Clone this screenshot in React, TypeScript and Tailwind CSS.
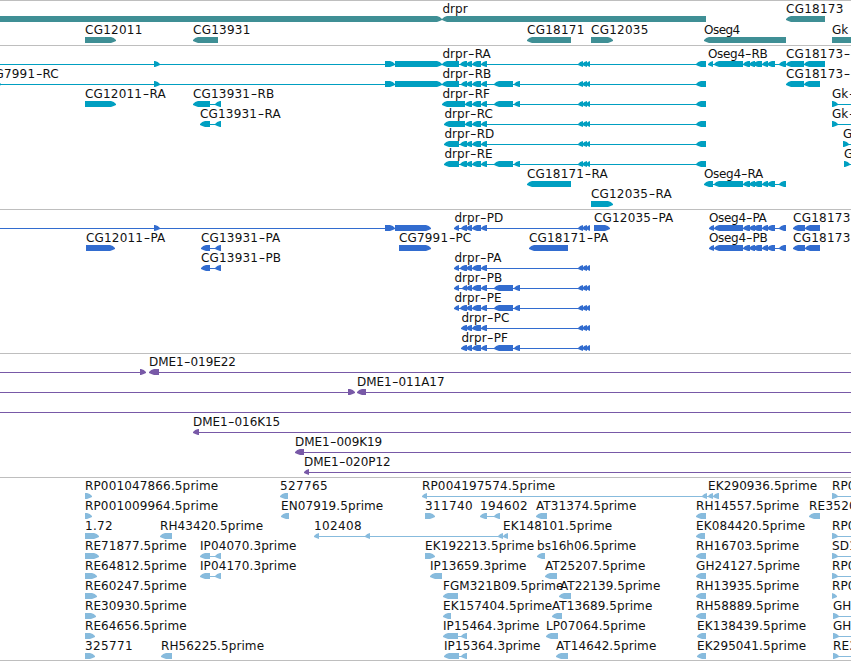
type Dir = 'l' | 'r'

type Feature = {
  name?: string
  at?: number
  dir?: Dir
  line?: [number, number]
  boxes?: number[][]
}

type TrackData = {
  id: string
  color: string
  className: string
  rowClass: string
  rows: Feature[][]
}

// exon groups shared by several transcripts
const TAIL = [[472, 481], [481, 487]]
const MID = [[494, 513], [514, 520]]
const FIRST = [[578, 583], [582, 587], [586, 590]]
const UTR = [[696, 706]]
const OSEG = [[714, 743], [743, 750], [749, 755], [753, 762], [762, 768], [767, 775], [779, 786]]
const CG7991 = [[154, 160], [385, 395], [395, 442]]

const f = (name: string, dir: Dir, boxes: number[][], line?: [number, number], at?: number): Feature => ({
  name,
  dir,
  boxes,
  line,
  at,
})

const gk = (name: string, x: number): Feature => f(name, 'r', [[x, x + 6]], [x, 860])
const est = (name: string, x: number): Feature => f(name, 'r', [[x, x + 6]], [x, 860])

const tracks: TrackData[] = [
  {
    id: 'gene',
    color: '#3f8f95',
    className: 'h-[45px]',
    rowClass: 'h-[21px]',
    rows: [
      [
        { dir: 'r', boxes: [[-10, 442]] },
        f('drpr', 'l', [[442, 706]]),
        f('CG18173', 'l', [[786, 825]]),
      ],
      [
        f('CG12011', 'r', [[85, 116]]),
        f('CG13931', 'l', [[193, 218]]),
        f('CG18171', 'l', [[527, 571]]),
        f('CG12035', 'r', [[591, 613]]),
        f('Oseg4', 'l', [[704, 786]]),
        f('Gk', 'r', [[832, 870]]),
      ],
    ],
  },
  {
    id: 'transcript',
    color: '#009fc1',
    className: 'h-[164px]',
    rowClass: 'h-5',
    rows: [
      [
        { dir: 'r', line: [0, 442], boxes: CG7991 },
        f('drpr-RA', 'l', [[442, 459], [460, 467], [466, 472], ...TAIL, ...FIRST, ...UTR], [442, 706]),
        f('Oseg4-RB', 'l', [[708, 713], ...OSEG], [708, 786]),
        f('CG18173-', 'l', [[786, 804], [804, 825]]),
      ],
      [
        f('CG7991-RC', 'r', [[-5, 1], ...CG7991], [0, 442], -14),
        f('drpr-RB', 'l', [[442, 459], [461, 467], [466, 472], ...TAIL, ...MID, ...FIRST, ...UTR], [442, 706]),
        f('CG18173-', 'l', [[786, 804], [804, 820]]),
      ],
      [
        f('CG12011-RA', 'r', [[85, 116]]),
        f('CG13931-RB', 'l', [[193, 210], [215, 221]], [193, 221]),
        f('drpr-RF', 'l', [[442, 465], [465, 472], ...TAIL, ...MID, ...FIRST, ...UTR], [442, 706]),
        gk('Gk-', 832),
      ],
      [
        f('CG13931-RA', 'l', [[200, 210], [215, 221]], [200, 221]),
        f('drpr-RC', 'l', [[444, 465], [465, 472], ...TAIL, ...FIRST, ...UTR], [444, 706]),
        gk('Gk-', 832),
      ],
      [
        f('drpr-RD', 'l', [[444, 459], [460, 467], [466, 472], ...TAIL, ...FIRST, ...UTR], [444, 706]),
        gk('G', 843),
      ],
      [
        f('drpr-RE', 'l', [[444, 459], [460, 467], [466, 472], ...TAIL, ...MID, ...FIRST, ...UTR], [444, 706]),
        gk('G', 844),
      ],
      [
        f('CG18171-RA', 'l', [[527, 571]]),
        f('Oseg4-RA', 'l', [[704, 713], ...OSEG], [704, 786]),
      ],
      [f('CG12035-RA', 'r', [[591, 613]])],
    ],
  },
  {
    id: 'protein',
    color: '#326ccf',
    className: 'h-36',
    rowClass: 'h-5',
    rows: [
      [
        { dir: 'r', line: [0, 430], boxes: [[154, 160], [385, 395], [395, 431]] },
        f('drpr-PD', 'l', [[454, 459], [461, 467], [466, 472], ...TAIL, ...FIRST], [454, 590]),
        f('CG12035-PA', 'r', [[594, 610]]),
        f('Oseg4-PA', 'l', [[709, 714], ...OSEG], [709, 786]),
        f('CG18173', 'l', [[793, 805], [805, 820]]),
      ],
      [
        f('CG12011-PA', 'r', [[86, 115]]),
        f('CG13931-PA', 'l', [[201, 210], [215, 221]], [201, 221]),
        f('CG7991-PC', 'r', [[399, 431]]),
        f('CG18171-PA', 'l', [[529, 568]]),
        f('Oseg4-PB', 'l', [[709, 714], ...OSEG], [709, 786]),
        f('CG18173', 'l', [[793, 805], [805, 820]]),
      ],
      [
        f('CG13931-PB', 'l', [[201, 210], [215, 221]], [201, 221]),
        f('drpr-PA', 'l', [[454, 459], [460, 467], [466, 472], ...TAIL, ...FIRST], [454, 590]),
      ],
      [f('drpr-PB', 'l', [[454, 459], [462, 467], [466, 472], ...TAIL, ...MID, ...FIRST], [454, 590])],
      [f('drpr-PE', 'l', [[454, 459], [460, 467], [466, 472], ...TAIL, ...MID, ...FIRST], [454, 590])],
      [f('drpr-PC', 'l', [[461, 467], [466, 472], ...TAIL, ...FIRST], [461, 590])],
      [f('drpr-PF', 'l', [[461, 467], [466, 472], ...TAIL, ...MID, ...FIRST], [461, 590])],
    ],
  },
  {
    id: 'bac',
    color: '#7859a7',
    className: 'h-[124px]',
    rowClass: 'h-5',
    rows: [
      [
        { dir: 'r', line: [0, 146], boxes: [[140, 146]] },
        f('DME1-019E22', 'l', [[149, 159]], [149, 851]),
      ],
      [
        { dir: 'r', line: [0, 355], boxes: [[348, 355]] },
        f('DME1-011A17', 'l', [[357, 366]], [357, 851]),
      ],
      [{ line: [0, 851] }],
      [f('DME1-016K15', 'l', [[193, 199]], [193, 851])],
      [f('DME1-009K19', 'l', [[295, 304]], [295, 851])],
      [f('DME1-020P12', 'l', [[304, 309]], [304, 851])],
    ],
  },
  {
    id: 'est',
    color: '#87bbdd',
    className: 'h-[184px] border-b',
    rowClass: 'h-5',
    rows: [
      [
        f('RP001047866.5prime', 'r', [[85, 92]]),
        f('527765', 'l', [[280, 288]]),
        f('RP004197574.5prime', 'l', [[422, 427], [702, 707]], [422, 719]),
        f('EK290936.5prime', 'l', [[708, 713], [713, 719]]),
        est('RP0', 832),
      ],
      [
        f('RP001009964.5prime', 'r', [[85, 92]]),
        f('EN07919.5prime', 'l', [[281, 289]]),
        f('311740', 'r', [[425, 435]]),
        f('194602', 'l', [[480, 487], [494, 500]], [480, 500]),
        f('AT31374.5prime', 'l', [[536, 547]]),
        f('RH14557.5prime', 'l', [[696, 706]]),
        f('RE3520', 'l', [[809, 820]]),
      ],
      [
        f('1.72', 'r', [[85, 99]]),
        f('RH43420.5prime', 'l', [[160, 172]]),
        f('102408', 'l', [[314, 319], [365, 370], [498, 503]], [314, 503]),
        f('EK148101.5prime', 'l', [[503, 508]]),
        f('EK084420.5prime', 'l', [[696, 705]]),
        est('RP0', 832),
      ],
      [
        f('RE71877.5prime', 'r', [[85, 99]]),
        f('IP04070.3prime', 'l', [[200, 210], [215, 221]], [200, 221]),
        f('EK192213.5prime', 'r', [[425, 435]]),
        f('bs16h06.5prime', 'l', [[537, 545]]),
        f('RH16703.5prime', 'l', [[696, 706]]),
        est('SD1', 832),
      ],
      [
        f('RE64812.5prime', 'r', [[85, 97]]),
        f('IP04170.3prime', 'l', [[200, 210], [215, 221]], [200, 221]),
        f('IP13659.3prime', 'l', [[430, 442]]),
        f('AT25207.5prime', 'l', [[545, 557]]),
        f('GH24127.5prime', 'l', [[696, 706]]),
        est('RP0', 832),
      ],
      [
        f('RE60247.5prime', 'r', [[85, 97]]),
        f('FGM321B09.5prime', 'l', [[443, 458]]),
        f('AT22139.5prime', 'l', [[559, 571]], undefined, 560),
        f('RH13935.5prime', 'l', [[696, 706]]),
        f('RP0', 'r', [[832, 837]]),
      ],
      [
        f('RE30930.5prime', 'r', [[85, 96]]),
        f('EK157404.5prime', 'l', [[443, 451]]),
        f('AT13689.5prime', 'l', [[552, 562]]),
        f('RH58889.5prime', 'l', [[696, 706]]),
        est('GH', 833),
      ],
      [
        f('RE64656.5prime', 'r', [[85, 95]]),
        f('IP15464.3prime', 'l', [[443, 458], [461, 467]], [443, 467]),
        f('LP07064.5prime', 'l', [[546, 558]]),
        f('EK138439.5prime', 'l', [[697, 706]]),
        est('GH', 833),
      ],
      [
        f('325771', 'r', [[85, 95]]),
        f('RH56225.5prime', 'l', [[161, 172]]),
        f('IP15364.3prime', 'l', [[444, 459], [461, 467]], [444, 467]),
        f('AT14642.5prime', 'l', [[556, 568]]),
        f('EK295041.5prime', 'l', [[697, 706]]),
        est('RE3', 833),
      ],
    ],
  },
]

function arrow([a, b]: number[], dir: Dir) {
  const head = Math.min(b - a, 5)
  const mid = head * 0.45
  if (dir === 'l') return `M${a} 18L${a + mid} 16L${a + head} 15H${b}V21H${a + head}L${a + mid} 20L${a} 19Z`
  return `M${b} 18L${b - mid} 16L${b - head} 15H${a}V21H${b - head}L${b - mid} 20L${b} 19Z`
}

// digits sit on an 8px pitch, spread the extra over the whole label
function spacing(name: string) {
  let extra = name.replace(/\D/g, '').length * 0.36
  if (name.startsWith('Oseg') || name.startsWith('DME')) extra -= 3
  if (name.endsWith('prime')) extra -= 1
  return extra / name.length
}

function Row({ features, color, rowClass }: { features: Feature[]; color: string; rowClass: string }) {
  return (
    <div className={`relative w-full ${rowClass}`}>
      <svg className="block overflow-visible" width="851" height="20" fill={color}>
        {features.map((ft, i) => (
          <g key={i}>
            {ft.line && <rect x={ft.line[0]} y="18" width={ft.line[1] - ft.line[0]} height="1" />}
            {ft.boxes?.map((box, j) => <path key={j} d={arrow(box, ft.dir ?? 'r')} />)}
          </g>
        ))}
      </svg>
      {features.map((ft, i) => {
        if (!ft.name) return null
        const [head, tail] = ft.name.split('-')
        return (
          <span
            key={i}
            className="absolute top-0 text-[12px] leading-4 whitespace-pre text-[#111]"
            style={{ left: (ft.at ?? ft.boxes![0][0]) + (head === 'drpr' ? 0.5 : 0), letterSpacing: spacing(ft.name) }}
          >
            {head}
            {tail !== undefined && <span className="inline-block scale-x-150 mx-[1.4px]">-</span>}
            {tail}
          </span>
        )
      })}
    </div>
  )
}

export default function App() {
  return (
    <div className="w-[851px] h-[661px] overflow-hidden bg-white font-['DejaVu_Sans',sans-serif]">
      {tracks.map((track) => (
        <section key={track.id} className={`border-t border-[#bebebe] ${track.className}`}>
          {track.rows.map((features, i) => (
            <Row key={i} features={features} color={track.color} rowClass={track.rowClass} />
          ))}
        </section>
      ))}
    </div>
  )
}
